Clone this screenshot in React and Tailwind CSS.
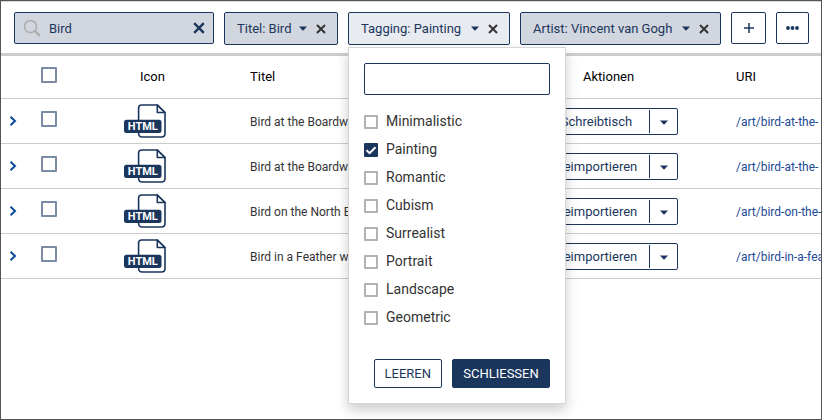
import React, { useState } from "react";

const NAVY = "#1b365d";

const ROWS = [
  { title: "Bird at the Boardwalk", action: "Schreibtisch", uri: "/art/bird-at-the-" },
  { title: "Bird at the Boardwalk", action: "Reimportieren", uri: "/art/bird-at-the-" },
  { title: "Bird on the North Beach", action: "Reimportieren", uri: "/art/bird-on-the-" },
  { title: "Bird in a Feather world", action: "Reimportieren", uri: "/art/bird-in-a-fea" },
];

const TAGS = ["Minimalistic", "Painting", "Romantic", "Cubism", "Surrealist", "Portrait", "Landscape", "Geometric"];

function Caret() {
  return (
    <svg width="8" height="5" viewBox="0 0 8 5" fill={NAVY} aria-hidden="true">
      <path d="M0 0.5H8L4.6 4.2Q4 4.8 3.4 4.2Z" />
    </svg>
  );
}

function Cross({ size, color, width }) {
  return (
    <svg width={size} height={size} viewBox="0 0 10 10" fill="none" stroke={color} strokeWidth={width} aria-hidden="true">
      <path d="M1 1L9 9M9 1L1 9" />
    </svg>
  );
}

function HtmlIcon() {
  return (
    <svg width="42" height="34" viewBox="0 0 42 34" fill="none" role="img" aria-label="HTML">
      <path
        d="M14.6 17V4Q14.6 1 17.6 1H33.3L41 8.5V29.5Q41 33 37.5 33H18Q14.6 33 14.6 29"
        stroke={NAVY}
        strokeWidth="1.6"
      />
      <path d="M33.3 1V8.5H41Z" stroke={NAVY} strokeWidth="1.6" strokeLinejoin="round" />
      <rect x="0" y="15.8" width="37.5" height="13.2" rx="2.5" fill={NAVY} />
      <text x="18.8" y="26.2" textAnchor="middle" fill="#fff" fontSize="11" fontWeight="700" fontFamily="Roboto, sans-serif">
        HTML
      </text>
    </svg>
  );
}

function Chip({ label, active, width, children }) {
  return (
    <div className={`relative shrink-0 ${width}`}>
      <div
        className={`flex h-[33px] items-center rounded-xs border border-[#1b365d] pl-3 pr-[11px] ${
          active ? "bg-[#e8ebf0]" : "bg-[#d2d6de]"
        }`}
      >
        <button
          type="button"
          aria-expanded={!!active}
          className="flex flex-1 items-center justify-between whitespace-nowrap text-[13px] text-[#1b365d]"
        >
          {label}
          <Caret />
        </button>
        <button type="button" aria-label={`${label} entfernen`} className="ml-[9px]">
          <Cross size={10} color="#333" width="2" />
        </button>
      </div>
      {children}
    </div>
  );
}

function TagMenu() {
  const [selected, setSelected] = useState(["Painting"]);
  const toggle = (tag) =>
    setSelected((list) => (list.includes(tag) ? list.filter((t) => t !== tag) : [...list, tag]));
  return (
    <div className="absolute left-0 top-[35px] z-10 w-[218px] border border-[#d6d6d6] bg-white p-[15px] shadow-[0_6px_12px_rgba(0,0,0,0.2)]">
      <input
        type="text"
        aria-label="Tags filtern"
        className="block h-8 w-full rounded-xs border border-[#1b365d] bg-white px-2 text-sm outline-none"
      />
      <div className="mt-3 flex flex-col">
        {TAGS.map((tag) => (
          <label key={tag} className="flex h-7 items-center gap-2 text-sm text-[#333]">
            <span className="relative mt-[2px] flex size-[14px]">
              <input
                type="checkbox"
                checked={selected.includes(tag)}
                onChange={() => toggle(tag)}
                className="peer size-[14px] appearance-none rounded-[1px] border-2 border-[#b3b3b3] bg-white checked:border-[#1b365d] checked:bg-[#1b365d]"
              />
              <svg
                className="pointer-events-none absolute inset-0 hidden peer-checked:block"
                width="14"
                height="14"
                viewBox="0 0 14 14"
                fill="none"
                stroke="#fff"
                strokeWidth="2"
                aria-hidden="true"
              >
                <path d="M2.5 7.3L5.6 10.2L11.5 4.2" />
              </svg>
            </span>
            {tag}
          </label>
        ))}
      </div>
      <div className="mt-7 flex justify-end gap-[10px] text-[13px]">
        <button type="button" className="h-[29px] rounded-xs border border-[#1b365d] bg-white px-[10px] text-[#1b365d]">
          LEEREN
        </button>
        <button type="button" className="h-[29px] min-w-[98px] rounded-xs border border-[#1b365d] bg-[#1b365d] px-2 text-white">
          SCHLIESSEN
        </button>
      </div>
    </div>
  );
}

function RowCheck({ label }) {
  return (
    <input
      type="checkbox"
      aria-label={label}
      className="block size-4 appearance-none rounded-[1px] border-2 border-[#7b8ba5] bg-white checked:bg-[#1b365d]"
    />
  );
}

export default function App() {
  return (
    <div className="min-h-screen overflow-hidden border border-[#555] bg-white font-[Roboto,sans-serif]">
      <header className="flex items-start gap-[10px] border-b-3 border-t border-b-[#cccccc] border-t-[#d8d8d8] pb-2 pl-[13px] pr-3 pt-[10px]">
        <div className="flex h-8 w-[200px] shrink-0 items-center rounded-xs border border-[#1b365d] bg-[#d2d6de] px-2">
          <svg width="18" height="18" viewBox="0 0 18 18" fill="none" stroke="#aaa" strokeWidth="1.5" aria-hidden="true">
            <circle cx="7.5" cy="7.5" r="6" />
            <path d="M11.8 11.8L17 17" strokeWidth="2" />
          </svg>
          <input
            type="text"
            aria-label="Suche"
            defaultValue="Bird"
            className="ml-2 min-w-0 flex-1 bg-transparent pt-px text-[13px] text-[#1b365d] outline-none"
          />
          <button type="button" aria-label="Suche leeren">
            <Cross size={12} color={NAVY} width="2" />
          </button>
        </div>
        <Chip label="Titel: Bird" width="w-[114px]" />
        <Chip label="Tagging: Painting" width="w-[162px]" active>
          <TagMenu />
        </Chip>
        <Chip label="Artist: Vincent van Gogh" width="w-[201px]" />
        <div className="ml-auto flex shrink-0 gap-[10px]">
          <button type="button" aria-label="Filter hinzufügen" className="flex h-8 w-[35px] items-center justify-center rounded-xs border border-[#1b365d]">
            <svg width="10" height="10" viewBox="0 0 10 10" stroke={NAVY} strokeWidth="1.5" aria-hidden="true">
              <path d="M5 0V10M0 5H10" />
            </svg>
          </button>
          <button type="button" aria-label="Mehr" className="flex h-8 w-[33px] items-center justify-center rounded-xs border border-[#1b365d]">
            <svg width="13" height="4" viewBox="0 0 13 4" fill={NAVY} aria-hidden="true">
              <circle cx="2" cy="2" r="1.9" />
              <circle cx="6.5" cy="2" r="1.9" />
              <circle cx="11" cy="2" r="1.9" />
            </svg>
          </button>
        </div>
      </header>

      <table className="w-full table-fixed border-collapse text-left">
        <colgroup>
          <col className="w-10" />
          <col className="w-[83px]" />
          <col className="w-[126px]" />
          <col />
          <col className="w-[197px]" />
          <col className="w-[85px]" />
        </colgroup>
        <thead>
          <tr className="h-[42px] border-b border-[#cccccc] text-[13px] text-black">
            <td />
            <th className="p-0 pb-1">
              <RowCheck label="Alle auswählen" />
            </th>
            <th className="p-0 pl-4 font-normal">Icon</th>
            <th className="p-0 font-normal">Titel</th>
            <th className="p-0 pl-11 font-normal">Aktionen</th>
            <th className="p-0 font-normal">URI</th>
          </tr>
        </thead>
        <tbody>
          {ROWS.map((row, i) => (
            <tr key={i} className="h-[45px] border-b border-[#cccccc] text-xs text-[#333]">
              <td className="p-0 pl-2">
                <button type="button" aria-label="Aufklappen" className="block">
                  <svg width="8" height="10" viewBox="0 0 8 10" fill="none" stroke="#0d4a9c" strokeWidth="2" aria-hidden="true">
                    <path d="M1.5 0.8L6 5L1.5 9.2" />
                  </svg>
                </button>
              </td>
              <td className="p-0 pb-1">
                <RowCheck label={row.title} />
              </td>
              <td className="p-0">
                <HtmlIcon />
              </td>
              <td className="overflow-hidden whitespace-nowrap p-0 pt-0.5">{row.title}</td>
              <td className="p-0 pt-px">
                <div className="flex h-[27px] w-[139px] items-center rounded-xs border border-[#1b365d] text-[13px] text-[#1b365d]">
                  <button type="button" className="h-full flex-1 pl-1 pt-0.5">
                    {row.action}
                  </button>
                  <span className="h-[23px] w-px bg-[#1b365d]" />
                  <button type="button" aria-label="Weitere Aktionen" className="flex h-full w-[27px] items-center justify-center pt-0.5">
                    <Caret />
                  </button>
                </div>
              </td>
              <td className="overflow-hidden whitespace-nowrap p-0 pt-0.5">
                <a href="#" className="text-[#1c4a94]">
                  {row.uri}
                </a>
              </td>
            </tr>
          ))}
        </tbody>
      </table>
    </div>
  );
}
